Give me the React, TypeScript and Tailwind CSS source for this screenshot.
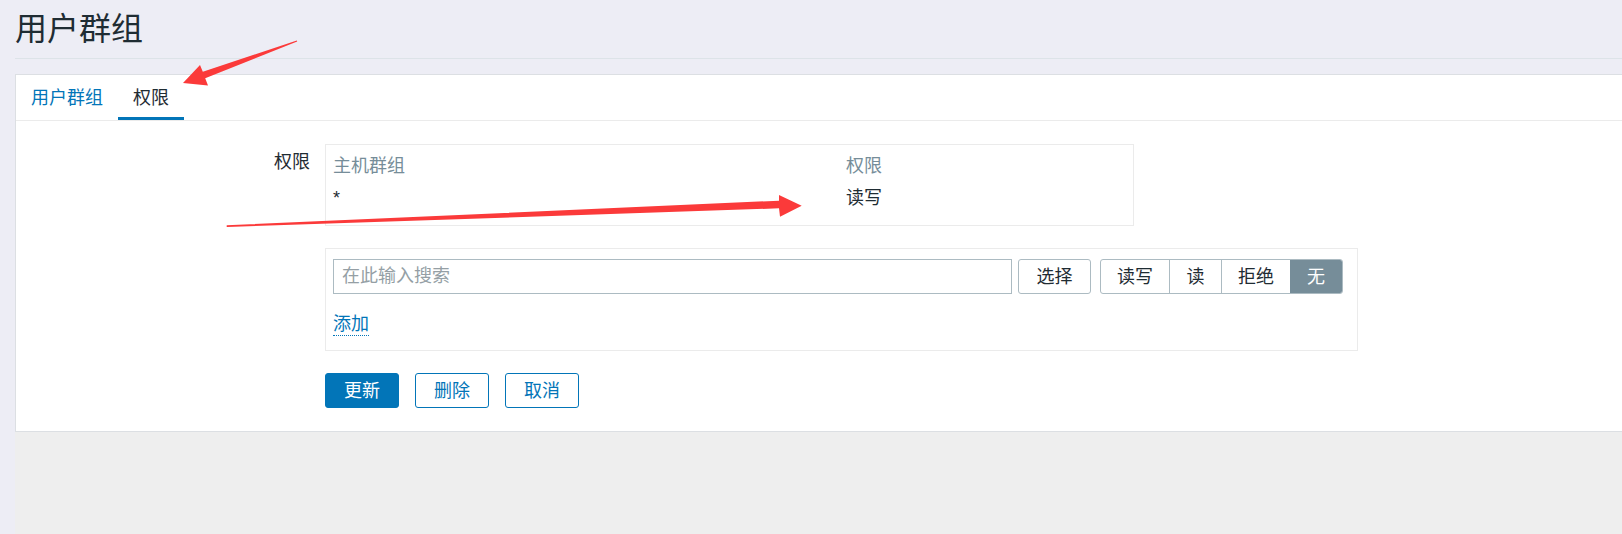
export default function App() {
  return (
    <div className="relative flex min-h-[534px] w-full overflow-hidden bg-[#ededf5] font-['Liberation_Sans','Noto_Sans_CJK_SC',sans-serif] text-[#1f2c33]">
      <div className="w-[15px] shrink-0" />
      <div className="flex min-h-[534px] flex-1 flex-col">
        <header className="border-b border-[#dde3e8] pt-[14px] pb-[13px]">
          <h1 className="text-[32px] leading-[31px] font-normal">用户群组</h1>
        </header>
        <div className="h-[15px]" />
        <section className="border border-r-0 border-[#dcdfe3] bg-white pb-[23px]">
          <ul className="flex border-b border-[#ebebeb] text-[18px] leading-[22px]">
            <li className="border-b-[3px] border-transparent px-[15px] pt-[12px] pb-[8px] text-[#0275b8]">用户群组</li>
            <li className="border-b-[3px] border-[#0275b8] px-[15px] pt-[12px] pb-[8px] text-[#1f2c33]">权限</li>
          </ul>
          <div className="pt-[23px] text-[18px] leading-[22px]">
            <div className="flex">
              <div className="w-[294px] shrink-0 pt-[7px] text-right">权限</div>
              <div className="ml-[15px] w-[809px] border border-[#ebebeb] px-[7px] pt-[10px] pb-[16px]">
                <div className="grid grid-cols-[513px_1fr] text-[#768d99]">
                  <div>主机群组</div>
                  <div>权限</div>
                </div>
                <div className="mt-[10px] grid grid-cols-[513px_1fr]">
                  <div>*</div>
                  <div>读写</div>
                </div>
              </div>
            </div>
            <div className="mt-[22px] ml-[309px] w-[1033px] border border-[#ebebeb] px-[7px] pt-[10px] pb-[14px]">
              <div className="flex items-center">
                <input
                  className="h-[35px] w-[679px] border border-[#acbbc2] px-[8px] text-[18px] text-[#1f2c33] outline-none placeholder:text-[#959fa5]"
                  placeholder="在此输入搜索"
                />
                <button className="ml-[6px] h-[35px] w-[73px] rounded-[3px] border border-[#acbbc2] bg-white text-[18px] text-[#1f2c33]">选择</button>
                <div className="ml-[9px] flex h-[35px] overflow-hidden rounded-[3px] border border-[#acbbc2] text-[18px]">
                  <div className="flex w-[68px] items-center justify-center">读写</div>
                  <div className="flex w-[52px] items-center justify-center border-l border-[#acbbc2]">读</div>
                  <div className="flex w-[69px] items-center justify-center border-l border-[#acbbc2]">拒绝</div>
                  <div className="flex w-[52px] items-center justify-center bg-[#768d99] text-white">无</div>
                </div>
              </div>
              <div className="mt-[19px]">
                <span className="inline-block border-b border-dotted border-[#0275b8] leading-[22px] text-[#0275b8]">添加</span>
              </div>
            </div>
            <div className="mt-[22px] ml-[309px] flex gap-[16px]">
              <button className="h-[35px] w-[74px] rounded-[3px] border border-[#0275b8] bg-[#0275b8] text-[18px] text-white">更新</button>
              <button className="h-[35px] w-[74px] rounded-[3px] border border-[#0275b8] bg-white text-[18px] text-[#0275b8]">删除</button>
              <button className="h-[35px] w-[74px] rounded-[3px] border border-[#0275b8] bg-white text-[18px] text-[#0275b8]">取消</button>
            </div>
          </div>
        </section>
        <div className="flex-1 bg-[#eeeeee]" />
      </div>
      <svg className="pointer-events-none absolute left-0 top-0" width="1622" height="534" viewBox="0 0 1622 534">
        <polygon
          fill="#fb3a3a"
          points="183,83 200,65 202.8,71.7 296.8,40.5 297.2,41.5 205.2,78.3 208,85.5"
        />
        <polygon
          fill="#fb3a3a"
          points="226.7,225.3 779,200.7 779,195 801.7,205.7 780,216.7 779,208.3 226.7,227"
        />
      </svg>
    </div>
  );
}
